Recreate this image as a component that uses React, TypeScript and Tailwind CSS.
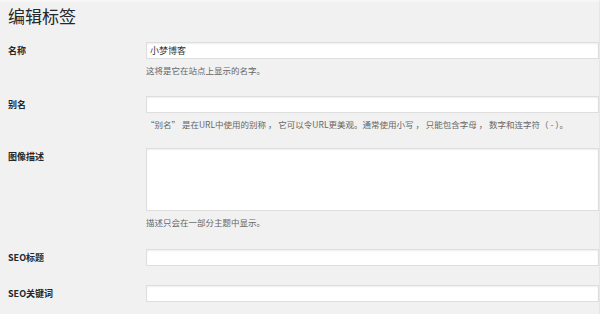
import React from 'react';

type Field = {
    label: string;
    value?: string;
    hint?: string;
    multiline?: boolean;
    gap: string;
};

const fields: Field[] = [
    { label: '名称', value: '小梦博客', hint: '这将是它在站点上显示的名字。', gap: 'mt-[15px]' },
    { label: '别名', hint: '“别名” 是在URL中使用的别称 ， 它可以令URL更美观。通常使用小写 ， 只能包含字母 ， 数字和连字符（ - ）。', gap: 'mt-[20px]' },
    { label: '图像描述', multiline: true, hint: '描述只会在一部分主题中显示。', gap: 'mt-[18px]' },
    { label: 'SEO标题', gap: 'mt-[21px]' },
    { label: 'SEO关键词', gap: 'mt-[19px]' },
];

function FieldRow({ field }: { field: Field }) {
    const boxClass = "w-full border border-[#dedede] bg-white shadow-[inset_0_1px_2px_rgba(0,0,0,0.07)] text-[9px] text-[#333] px-[3px] outline-none";
    return (
        <div className={`flex ${field.gap}`}>
            <div className="w-[146px] shrink-0 pl-2 pt-[4px] text-[9px] leading-[10px] font-bold text-[#23282d]">
                {field.label}
            </div>
            <div className="flex-1 min-w-0">
                {field.multiline ? (
                    <textarea className={`${boxClass} h-[63px] block resize-none`} defaultValue={field.value} />
                ) : (
                    <input type="text" className={`${boxClass} h-[17px] block`} defaultValue={field.value} />
                )}
                {field.hint && (
                    <p className="mt-[5px] h-[12px] overflow-visible text-[8.5px] leading-[12px] text-[#666] whitespace-nowrap">{field.hint}</p>
                )}
            </div>
        </div>
    );
}

export default function App() {
    return (
        <div className="w-[600px] h-[314px] overflow-hidden bg-[#f1f1f1] border-t-2 border-t-[#f6f6f6] border-r border-r-[#e6e6e6] font-['Noto_Sans_CJK_SC','Microsoft_YaHei',sans-serif]">
            <h1 className="pl-2 pt-[3px] h-[25px] text-[17px] leading-[22px] font-normal text-[#23282d]">编辑标签</h1>
            {fields.map(f => (
                <FieldRow key={f.label} field={f} />
            ))}
        </div>
    );
}
